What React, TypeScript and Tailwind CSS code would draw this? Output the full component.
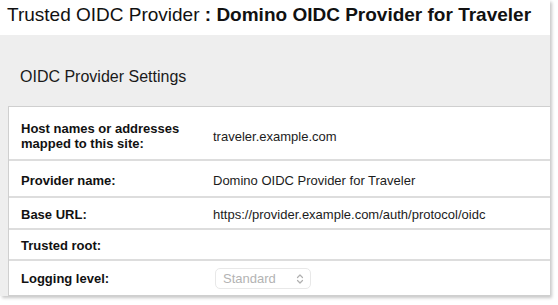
import React from 'react';

const rows: { label: React.ReactNode; value?: string; h: string }[] = [
  { label: <>Host names or addresses<br />mapped to this site:</>, value: 'traveler.example.com', h: 'h-[52px] pt-[6px]' },
  { label: 'Provider name:', value: 'Domino OIDC Provider for Traveler', h: 'h-[37px] pt-[3px]' },
  { label: 'Base URL:', value: 'https://provider.example.com/auth/protocol/oidc', h: 'h-[32px] pt-[2px]' },
  { label: 'Trusted root:', value: '', h: 'h-[31px] pt-[2px]' },
];

const App: React.FC = () => {
  return (
    <div className="w-[558px] h-[305px] bg-white font-['Liberation_Sans',Arial,sans-serif]">
      <div className="w-[550px] bg-white shadow-[2px_2px_3px_rgba(0,0,0,0.22)]">
        <div className="h-[35px] pt-[3px] pl-[7px] text-[19px] leading-[23px] text-[#111]">
          Trusted OIDC Provider <span className="font-bold">: Domino OIDC Provider for Traveler</span>
        </div>

        <div className="bg-[#eeeeee] pt-[32px] pl-[8px]">
          <h2 className="pl-[12px] text-[16px] leading-[20px] text-[#1a1a1a] mb-[19px]">
            OIDC Provider Settings
          </h2>

          <div className="bg-white border border-[#cfcfcf] border-r-0 text-[13px] leading-[15px]">
            {rows.map((r, i) => (
              <div
                key={i}
                className={`flex items-center ${r.h} ${i > 0 ? 'border-t-2 border-[#dddddd]' : ''}`}
              >
                <div className="w-[204px] pl-3 font-bold text-[#111]">{r.label}</div>
                <div className="text-[#1c1c1c]">{r.value}</div>
              </div>
            ))}
            <div className="flex items-center h-[36px] pt-[1px] border-t-2 border-[#dddddd]">
              <div className="w-[204px] pl-3 font-bold text-[#111]">Logging level:</div>
              <div className="ml-[2px] w-[96px] h-[21px] rounded-[5px] border border-[#e8e8e8] flex items-center justify-between pl-[7px] pr-[6px] text-[#b3b3b3]">
                <span>Standard</span>
                <svg width="8" height="12" viewBox="0 0 8 12" fill="none" stroke="#b0b0b0" strokeWidth="1.2" strokeLinecap="round" strokeLinejoin="round">
                  <path d="M1.5 4.5 L4 2 L6.5 4.5" />
                  <path d="M1.5 7.5 L4 10 L6.5 7.5" />
                </svg>
              </div>
            </div>
          </div>
        </div>
      </div>
    </div>
  );
};

export default App;
